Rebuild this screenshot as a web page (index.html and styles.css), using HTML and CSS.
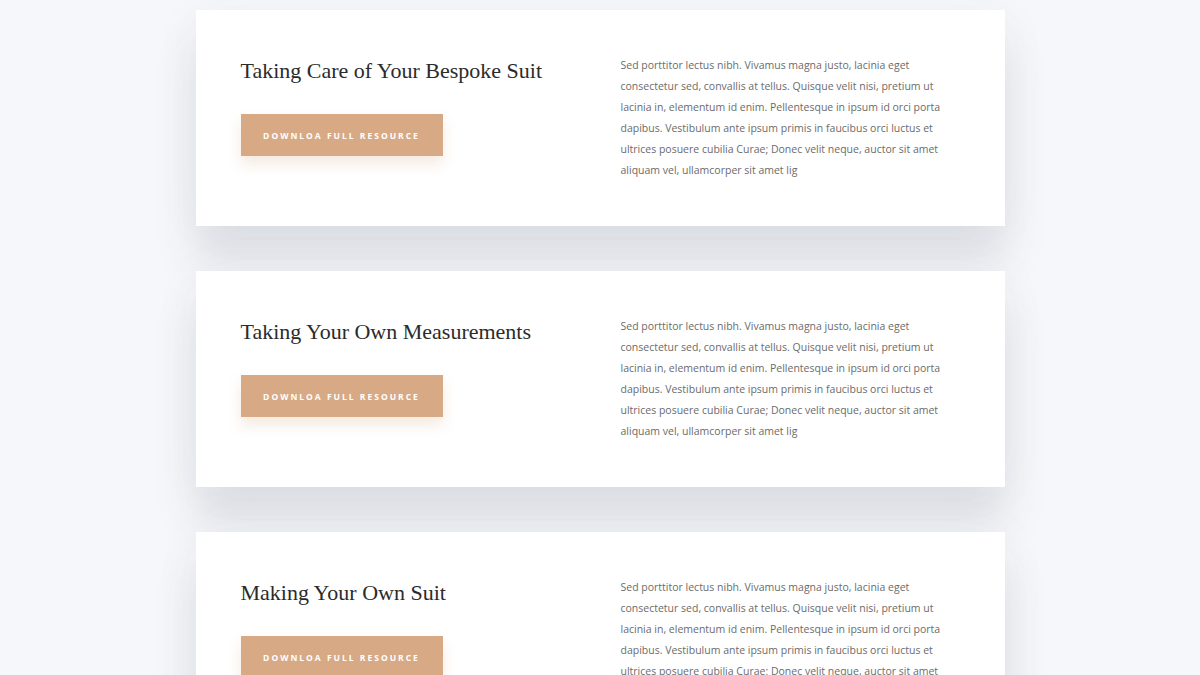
FILE: index.html
```html
<!DOCTYPE html>
<html>
<head>
<meta charset="utf-8">
<link rel="stylesheet" href="styles.css">
</head>
<body>
<div class="list">
  <div class="card">
    <div class="left">
      <h2 class="title">Taking Care of Your Bespoke Suit</h2>
      <a class="btn">Downloa Full Resource</a>
    </div>
    <p class="text">Sed porttitor lectus nibh. Vivamus magna justo, lacinia eget consectetur sed, convallis at tellus. Quisque velit nisi, pretium ut lacinia in, elementum id enim. Pellentesque in ipsum id orci porta dapibus. Vestibulum ante ipsum primis in faucibus orci luctus et ultrices posuere cubilia Curae; Donec velit neque, auctor sit amet aliquam vel, ullamcorper sit amet lig</p>
  </div>
  <div class="card">
    <div class="left">
      <h2 class="title">Taking Your Own Measurements</h2>
      <a class="btn">Downloa Full Resource</a>
    </div>
    <p class="text">Sed porttitor lectus nibh. Vivamus magna justo, lacinia eget consectetur sed, convallis at tellus. Quisque velit nisi, pretium ut lacinia in, elementum id enim. Pellentesque in ipsum id orci porta dapibus. Vestibulum ante ipsum primis in faucibus orci luctus et ultrices posuere cubilia Curae; Donec velit neque, auctor sit amet aliquam vel, ullamcorper sit amet lig</p>
  </div>
  <div class="card">
    <div class="left">
      <h2 class="title">Making Your Own Suit</h2>
      <a class="btn">Downloa Full Resource</a>
    </div>
    <p class="text">Sed porttitor lectus nibh. Vivamus magna justo, lacinia eget consectetur sed, convallis at tellus. Quisque velit nisi, pretium ut lacinia in, elementum id enim. Pellentesque in ipsum id orci porta dapibus. Vestibulum ante ipsum primis in faucibus orci luctus et ultrices posuere cubilia Curae; Donec velit neque, auctor sit amet aliquam vel, ullamcorper sit amet lig</p>
  </div>
</div>
</body>
</html>
```
FILE: styles.css
```css
html, body {
  margin: 0;
  padding: 0;
  background: #f6f7fa;
  overflow: hidden;
}
.list {
  width: 809px;
  margin: 10px auto 0;
  display: flex;
  flex-direction: column;
  gap: 45px;
}
.card {
  background: #fff;
  display: flex;
  padding: 45px 45px;
  box-shadow: 0 35px 40px rgba(60, 70, 90, 0.13), 0 0 50px rgba(60, 70, 90, 0.04);
  height: 126px;
}
.left {
  width: 379px;
  flex: none;
}
.title {
  margin: 0;
  padding-top: 1px;
  font-family: "Liberation Serif", "Times New Roman", serif;
  font-weight: normal;
  font-size: 22px;
  line-height: 30px;
  color: #2b2b2b;
}
.btn {
  display: inline-flex;
  align-items: center;
  justify-content: center;
  margin-top: 28px;
  width: 202px;
  height: 42px;
  background: #d7aa85;
  color: #fff;
  font-family: "Open Sans", "Liberation Sans", sans-serif;
  font-weight: 700;
  font-size: 8.5px;
  letter-spacing: 2px;
  text-transform: uppercase;
  box-shadow: 0 8px 14px rgba(215, 170, 133, 0.25);
}
.text {
  margin: 0;
  padding-left: 1px;
  width: 330px;
  font-family: "Open Sans", "Liberation Sans", sans-serif;
  font-size: 10.5px;
  line-height: 21px;
  color: #6b6b6b;
}
```
